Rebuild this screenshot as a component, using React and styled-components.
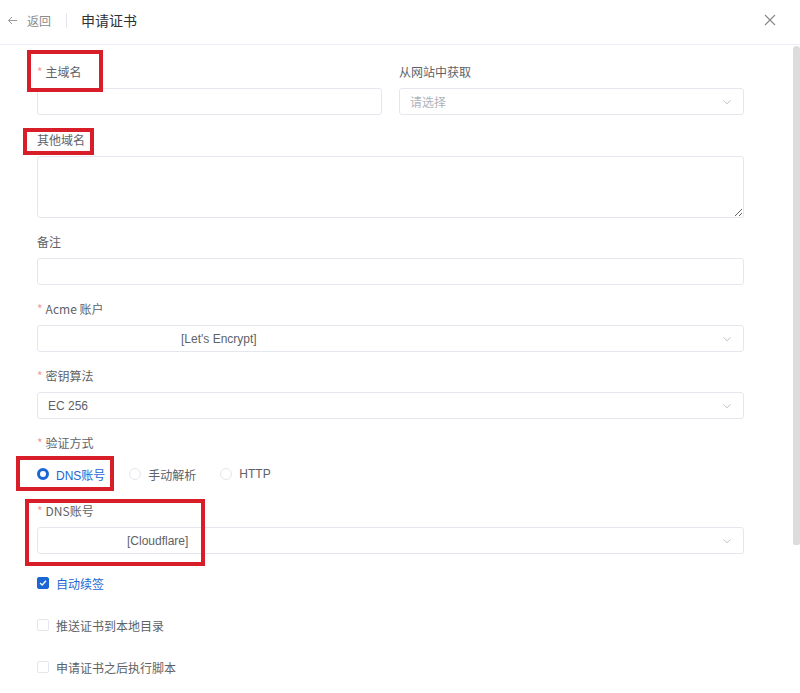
import styled, { createGlobalStyle } from "styled-components";

const GlobalStyle = createGlobalStyle`
  html, body {
    margin: 0;
    padding: 0;
    background: #fff;
  }
  body {
    font-family: "Noto Sans CJK SC", "Liberation Sans", Arial, sans-serif;
    color: #606266;
    font-size: 12px;
  }
  * {
    box-sizing: border-box;
  }
`;

const Drawer = styled.div`
  width: 800px;
  height: 693px;
  display: flex;
  flex-direction: column;
  background: #fff;
`;

const Header = styled.div`
  height: 45px;
  flex-shrink: 0;
  display: flex;
  align-items: center;
  padding: 0 24px 4px 7px;
  border-bottom: 1px solid #ebeef5;
`;

const Back = styled.div`
  display: flex;
  align-items: center;
  gap: 9px;
  color: #8c8c8c;
  font-size: 12px;
`;

const Divider = styled.span`
  width: 1px;
  height: 15px;
  background: #e4e7ed;
  margin: 0 14px 0 15px;
`;

const Title = styled.div`
  font-size: 14px;
  color: #303133;
  flex: 1;
`;

const Close = styled.button`
  border: none;
  background: none;
  padding: 0;
  display: flex;
  color: #8a8a8a;
  cursor: pointer;
`;

const Main = styled.div`
  flex: 1;
  min-height: 0;
  display: flex;
`;

const Body = styled.div`
  flex: 1;
  overflow: hidden;
  padding: 17px 49px 30px 37px;
`;

const ScrollTrack = styled.div`
  width: 7px;
  flex-shrink: 0;
  padding-top: 1px;
`;

const ScrollThumb = styled.div`
  height: 499px;
  background: #dcdcdc;
  border-radius: 4px 4px 3px 3px;
`;

const Row = styled.div`
  display: grid;
  grid-template-columns: 1fr 1fr;
  gap: 17px;
`;

const Item = styled.div`
  margin-bottom: ${(p) => p.$gap ?? 14}px;
`;

const Label = styled.div`
  height: 20px;
  line-height: 20px;
  margin-bottom: 6px;
  font-size: 12px;
  color: #606266;
  white-space: nowrap;
`;

const Req = styled.span`
  color: #f29b9b;
  margin-right: 3px;
`;

const Marked = styled.span`
  position: relative;
  display: ${(p) => (p.$block ? "block" : "inline-block")};
`;

const Frame = styled.span`
  position: absolute;
  top: ${(p) => p.$t}px;
  left: ${(p) => p.$l}px;
  right: ${(p) => p.$r}px;
  bottom: ${(p) => p.$b}px;
  border: 4px solid #d81e28;
  pointer-events: none;
`;

const Input = styled.input`
  display: block;
  width: 100%;
  height: 27px;
  border: 1px solid #e4e7ed;
  border-radius: 3px;
  outline: none;
  padding: 0 10px;
  font: inherit;
`;

const TextArea = styled.textarea`
  display: block;
  width: 100%;
  height: 62px;
  border: 1px solid #e4e7ed;
  border-radius: 3px;
  outline: none;
  padding: 5px 10px;
  font: inherit;
`;

const Select = styled.div`
  height: 27px;
  border: 1px solid #e4e7ed;
  border-radius: 3px;
  display: flex;
  align-items: center;
  padding: 0 10px 0 ${(p) => p.$pad ?? 10}px;
  font-family: "Liberation Sans", "Noto Sans CJK SC", Arial, sans-serif;
  font-size: 12px;
  color: ${(p) => (p.$placeholder ? "#b0b3b8" : "#606266")};
`;

const SelectText = styled.span`
  flex: 1;
  ${(p) => p.$cjk && `font-family: "Noto Sans CJK SC", sans-serif;`}
`;

const Chevron = () => (
  <svg width="12" height="12" viewBox="0 0 12 12" fill="none">
    <path d="M2.5 4.5 L6 7.8 L9.5 4.5" stroke="#c0c4cc" strokeWidth="1" />
  </svg>
);

const RadioRow = styled.div`
  height: 28px;
  display: flex;
  align-items: center;
  gap: 24px;
  padding-top: 2px;
`;

const Option = styled.label`
  display: inline-flex;
  align-items: center;
  gap: 7px;
  font-family: "Liberation Sans", "Noto Sans CJK SC", Arial, sans-serif;
  font-size: 12px;
  color: ${(p) => (p.$on ? "#1a66d2" : "#606266")};
  position: relative;
`;

const Dot = styled.span`
  width: 12px;
  height: 12px;
  border-radius: 50%;
  border: ${(p) => (p.$on ? "3.5px solid #1a66d2" : "1px solid #e4e7ed")};
  background: #fff;
`;

const Box = styled.span`
  width: 12px;
  height: 12px;
  border-radius: 2px;
  border: 1px solid ${(p) => (p.$on ? "#1a66d2" : "#e4e7ed")};
  background: ${(p) => (p.$on ? "#1a66d2" : "#fff")};
  display: flex;
  align-items: center;
  justify-content: center;
`;

const Check = styled.label`
  height: 28px;
  display: flex;
  align-items: center;
  gap: 7px;
  font-size: 12px;
  color: ${(p) => (p.$on ? "#1a66d2" : "#606266")};
  margin-bottom: 14px;
`;

const SelectField = ({ value, placeholder, pad, cjk }) => (
  <Select $placeholder={placeholder} $pad={pad}>
    <SelectText $cjk={cjk}>{value}</SelectText>
    <Chevron />
  </Select>
);

export default function App() {
  return (
    <Drawer>
      <GlobalStyle />
      <Header>
        <Back>
          <svg width="11" height="11" viewBox="0 0 11 11" fill="none">
            <path d="M10 5.5 H1.5 M5 2 L1.5 5.5 L5 9" stroke="#9a9a9a" strokeWidth="1" />
          </svg>
          返回
        </Back>
        <Divider />
        <Title>申请证书</Title>
        <Close>
          <svg width="12" height="12" viewBox="0 0 12 12" fill="none">
            <path d="M1 1 L11 11 M11 1 L1 11" stroke="#8a8a8a" strokeWidth="1.2" />
          </svg>
        </Close>
      </Header>

      <Main>
        <Body>
          <Row>
            <Item $gap={15}>
              <Label>
                <Marked>
                  <Req>*</Req>主域名
                  <Frame $t={-12} $l={-10} $r={-21} $b={-10} />
                </Marked>
              </Label>
              <Input />
            </Item>
            <Item $gap={15}>
              <Label>从网站中获取</Label>
              <SelectField value="请选择" placeholder cjk />
            </Item>
          </Row>

          <Item>
            <Label>
              <Marked>
                其他域名
                <Frame $t={-2} $l={-14} $r={-9} $b={-5} />
              </Marked>
            </Label>
            <TextArea />
          </Item>

          <Item>
            <Label>备注</Label>
            <Input />
          </Item>

          <Item>
            <Label>
              <Req>*</Req>Acme 账户
            </Label>
            <SelectField value="[Let's Encrypt]" pad={143} />
          </Item>

          <Item>
            <Label>
              <Req>*</Req>密钥算法
            </Label>
            <SelectField value="EC 256" />
          </Item>

          <Item>
            <Label>
              <Req>*</Req>验证方式
            </Label>
            <RadioRow>
              <Option $on>
                <Dot $on />
                DNS账号
                <Frame $t={-10} $l={-21} $r={-9} $b={-8} />
              </Option>
              <Option>
                <Dot />
                手动解析
              </Option>
              <Option>
                <Dot />
                HTTP
              </Option>
            </RadioRow>
          </Item>

          <Item $gap={15}>
            <Marked $block>
              <Label>
                <Req>*</Req>DNS账号
              </Label>
              <SelectField value="[Cloudflare]" pad={89} />
              <Frame $t={-2} $l={-12} $r={539} $b={-12} />
            </Marked>
          </Item>

          <Check $on>
            <Box $on>
              <svg width="8" height="8" viewBox="0 0 8 8" fill="none">
                <path d="M1 4 L3.2 6 L7 1.8" stroke="#fff" strokeWidth="1.3" />
              </svg>
            </Box>
            自动续签
          </Check>
          <Check>
            <Box />
            推送证书到本地目录
          </Check>
          <Check>
            <Box />
            申请证书之后执行脚本
          </Check>
        </Body>
        <ScrollTrack>
          <ScrollThumb />
        </ScrollTrack>
      </Main>
    </Drawer>
  );
}
